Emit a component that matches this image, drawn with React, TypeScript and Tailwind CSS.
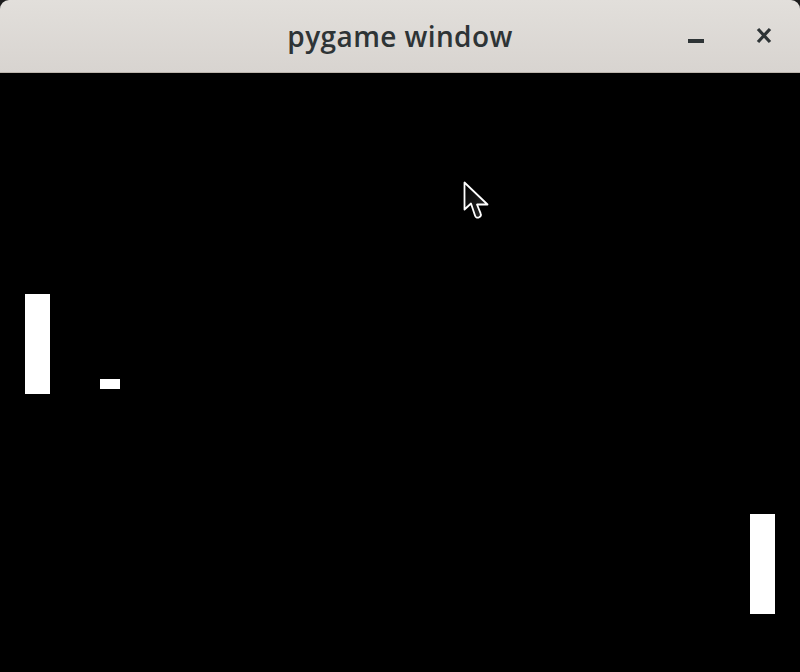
export default function App() {
  return (
    <div className="w-[800px] h-[672px] bg-[#1c1c1c] flex flex-col overflow-hidden">
      <div className="h-[73px] shrink-0 rounded-t-[9px] bg-gradient-to-b from-[#e2dfdb] to-[#d8d4d0] border-b border-[#bdb6ae] flex items-center relative">
        <div
          className="flex-1 text-center text-[28px] font-semibold tracking-[0.4px] text-[#2e3436] pb-[1px]"
          style={{ fontFamily: '"Open Sans", "Noto Sans", sans-serif' }}
        >
          pygame window
        </div>
        <div className="absolute right-[28px] top-[27px] flex items-start gap-[52px]">
          <div className="mt-[12px] w-[16px] h-[4px] bg-[#2e3436]" />
          <svg width="16" height="17" viewBox="0 0 16 17">
            <path d="M2 2 L14 15 M14 2 L2 15" stroke="#2e3436" strokeWidth="3.2" />
          </svg>
        </div>
      </div>
      <div className="flex-1 bg-black relative">
        <div className="absolute left-[25px] top-[221px] w-[25px] h-[100px] bg-white" />
        <div className="absolute left-[100px] top-[306px] w-[20px] h-[10px] bg-white" />
        <div className="absolute left-[750px] top-[441px] w-[25px] h-[100px] bg-white" />
        <svg
          className="absolute left-[463px] top-[108px]"
          width="28"
          height="42"
          viewBox="0 0 28 42"
        >
          <defs>
            <linearGradient id="cur" x1="0" y1="0" x2="1" y2="1">
              <stop offset="0" stopColor="#000" />
              <stop offset="1" stopColor="#2a2a2a" />
            </linearGradient>
          </defs>
          <path
            d="M1.5 1.5 L1.5 28.5 L8 22.5 L12 34.5 Q13 37.5 16 36.3 Q18.8 35 17.6 32.3 L14 23.5 L24.5 23.5 Z"
            fill="url(#cur)"
            stroke="#fff"
            strokeWidth="1.8"
            strokeLinejoin="round"
          />
        </svg>
      </div>
    </div>
  );
}
